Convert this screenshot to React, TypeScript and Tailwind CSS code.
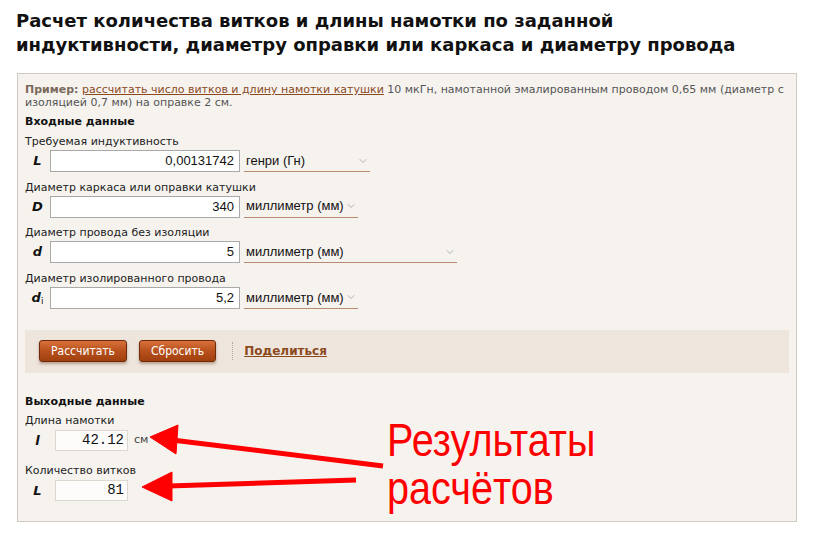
import { ChevronDown } from 'lucide-react';

const verdana = "font-['DejaVu_Sans',Verdana,sans-serif]";
const arial = "font-['Liberation_Sans',Arial,sans-serif]";

type Field = {
  caption: string;
  symbol: string;
  sub?: string;
  value: string;
  unit: string;
  selectWidth: string;
};

const inputs: Field[] = [
  { caption: 'Требуемая индуктивность', symbol: 'L', value: '0,00131742', unit: 'генри (Гн)', selectWidth: 'w-[126px]' },
  { caption: 'Диаметр каркаса или оправки катушки', symbol: 'D', value: '340', unit: 'миллиметр (мм)', selectWidth: 'w-[114px]' },
  { caption: 'Диаметр провода без изоляции', symbol: 'd', value: '5', unit: 'миллиметр (мм)', selectWidth: 'w-[213px]' },
  { caption: 'Диаметр изолированного провода', symbol: 'd', sub: 'i', value: '5,2', unit: 'миллиметр (мм)', selectWidth: 'w-[114px]' },
];

const outputs = [
  { caption: 'Длина намотки', symbol: 'l', value: '42.12', unit: 'см' },
  { caption: 'Количество витков', symbol: 'L', value: '81', unit: '' },
];

function Symbol({ symbol, sub }: { symbol: string; sub?: string }) {
  return (
    <span className={`w-[25px] shrink-0 text-center text-[13px] font-bold italic text-[#111] ${verdana}`}>
      {symbol}
      {sub && <sub className="text-[9px] not-italic font-normal">{sub}</sub>}
    </span>
  );
}

function InputRow({ field }: { field: Field }) {
  return (
    <div className="mb-[8.6px]">
      <div className={`text-[11px] leading-[14px] text-[#222] mb-[1px] ${verdana}`}>{field.caption}</div>
      <div className="flex items-center">
        <Symbol symbol={field.symbol} sub={field.sub} />
        <div className={`w-[190px] h-[22px] bg-white border border-[#a9a9a9] flex items-center justify-end px-[5px] text-[13px] text-[#111] ${arial}`}>
          {field.value}
        </div>
        <div
          className={`${field.selectWidth} ml-[4px] h-[22px] border-b border-[#b88a70] flex items-center justify-between pl-[2px] pr-[1px] whitespace-nowrap text-[13px] text-[#111] ${arial}`}
        >
          <span>{field.unit}</span>
          <ChevronDown size={12} strokeWidth={1.2} className="shrink-0 text-[#888]" />
        </div>
      </div>
    </div>
  );
}

function Button({ label }: { label: string }) {
  return (
    <button className="h-[22px] px-[11px] rounded-[3px] border border-[#6e2a08] bg-gradient-to-b from-[#d8713a] via-[#b8501c] to-[#a0400e] text-white text-[12px] font-['DejaVu_Sans_Condensed','DejaVu_Sans',sans-serif] shadow-[0_2px_3px_rgba(80,30,0,0.35)]">
      {label}
    </button>
  );
}

export default function App() {
  return (
    <div className="relative w-[814px] h-[540px] bg-white overflow-hidden">
      <h1 className="pl-[16px] pt-[9px] text-[18px] leading-[24px] font-bold text-[#111] font-['DejaVu_Sans',Verdana,sans-serif]">
        Расчет количества витков и длины намотки по заданной
        <br />
        индуктивности, диаметру оправки или каркаса и диаметру провода
      </h1>

      <div className="ml-[17px] mt-[16px] w-[780px] h-[449px] border border-[#cfcac2] bg-[#f6f3ef] px-[7px] pt-[9px]">
        {/* example */}
        <p className={`text-[11px] leading-[13px] text-[#555] ${verdana}`}>
          <b className="text-[#7b6a5c]">Пример:</b>{' '}
          <span className="text-[#8b4a1e] underline">рассчитать число витков и длину намотки катушки</span> 10 мкГн,
          намотанной эмалированным проводом 0,65 мм (диаметр с
          <br />
          изоляцией 0,7 мм) на оправке 2 см.
        </p>

        <div className={`mt-[6px] mb-[6px] text-[11px] leading-[14px] font-bold text-[#111] ${verdana}`}>
          Входные данные
        </div>

        {inputs.map((f, i) => (
          <InputRow key={i} field={f} />
        ))}

        {/* actions */}
        <div className="mt-[21px] h-[43px] bg-[#eee5dc] flex items-center pl-[14px]">
          <Button label="Рассчитать" />
          <span className="w-[12px]" />
          <Button label="Сбросить" />
          <div className="ml-[16px] mr-[11px] h-[18px] border-l border-dotted border-[#aaa]" />
          <a className={`text-[12px] font-bold text-[#8b4a1e] underline ${verdana}`}>Поделиться</a>
        </div>

        <div className={`mt-[22px] mb-[5px] text-[11px] leading-[14px] font-bold text-[#111] ${verdana}`}>
          Выходные данные
        </div>

        {outputs.map((o, i) => (
          <div key={i} className="mb-[13px]">
            <div className={`text-[11px] leading-[14px] text-[#222] mb-[2px] ${verdana}`}>{o.caption}</div>
            <div className="flex items-center">
              <Symbol symbol={o.symbol} />
              <div className="ml-[5px] w-[73px] h-[21px] border border-[#dcd8d0] bg-[#fdfcfa] flex items-center justify-end pr-[3px] text-[14px] text-[#111] font-['Liberation_Mono','Courier_New',monospace]">
                {o.value}
              </div>
              {o.unit && <span className={`ml-[6px] text-[11px] text-[#444] ${verdana}`}>{o.unit}</span>}
            </div>
          </div>
        ))}
      </div>

      {/* annotation */}
      <svg className="absolute left-0 top-0" width="814" height="540">
        <g fill="#ff0000" stroke="#ff0000">
          <line x1="172" y1="440" x2="383" y2="466" strokeWidth="5" />
          <polygon points="150,437 178,425 176,454" strokeWidth="1" />
          <line x1="168" y1="486" x2="356" y2="480" strokeWidth="5" />
          <polygon points="142,487 172,472 172,501" strokeWidth="1" />
        </g>
      </svg>
      <div className={`absolute left-[387px] top-[416px] origin-left scale-x-[0.86] text-[46px] leading-[48px] text-[#ff0000] ${arial}`}>
        Результаты
        <br />
        расчётов
      </div>
    </div>
  );
}
